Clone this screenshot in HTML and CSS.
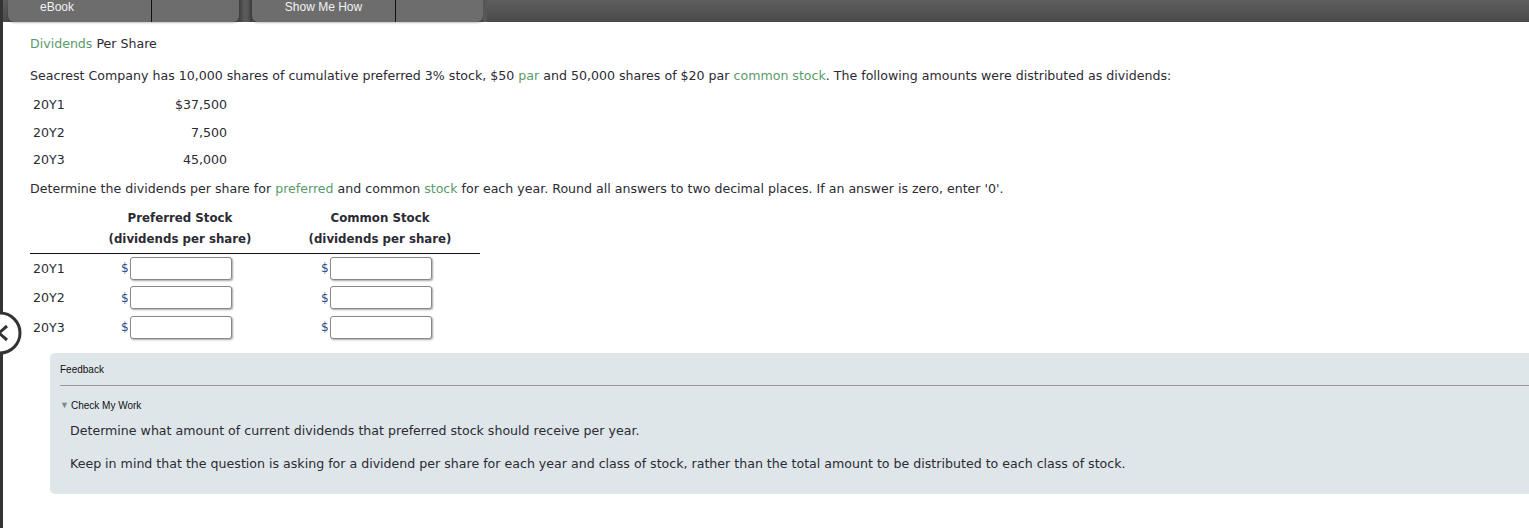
FILE: index.html
```html
<!DOCTYPE html>
<html>
<head>
<meta charset="utf-8">
<link rel="stylesheet" href="styles.css">
</head>
<body>
<div class="page">
  <div class="topbar">
    <div class="tab">
      <div class="tab-label tab-label-left">eBook</div>
      <div class="tab-blank"></div>
    </div>
    <div class="tab-gap"></div>
    <div class="tab">
      <div class="tab-label tab-label-center">Show Me How</div>
      <div class="tab-blank"></div>
    </div>
    <div class="bar-rest"></div>
  </div>

  <div class="content">
    <h1 class="title"><span class="term">Dividends</span> Per Share</h1>
    <p class="para">Seacrest Company has 10,000 shares of cumulative preferred 3% stock, $50 <span class="term">par</span> and 50,000 shares of $20 par <span class="term">common stock</span>. The following amounts were distributed as dividends:</p>

    <div class="amounts">
      <div class="amt-row"><span class="yr">20Y1</span><span class="val">$37,500</span></div>
      <div class="amt-row"><span class="yr">20Y2</span><span class="val">7,500</span></div>
      <div class="amt-row"><span class="yr">20Y3</span><span class="val">45,000</span></div>
    </div>

    <p class="para para2">Determine the dividends per share for <span class="term">preferred</span> and common <span class="term">stock</span> for each year. Round all answers to two decimal places. If an answer is zero, enter '0'.</p>

    <div class="answer">
      <div class="ans-head">
        <div class="yr-col"></div>
        <div class="col-a"><div class="head-cell">Preferred Stock<br>(dividends per share)</div></div>
        <div class="col-b"><div class="head-cell">Common Stock<br>(dividends per share)</div></div>
      </div>
      <div class="ans-row">
        <div class="yr-col">20Y1</div>
        <div class="col-a"><span class="dollar">$</span><span class="box"></span></div>
        <div class="col-b"><span class="dollar">$</span><span class="box"></span></div>
      </div>
      <div class="ans-row">
        <div class="yr-col">20Y2</div>
        <div class="col-a"><span class="dollar">$</span><span class="box"></span></div>
        <div class="col-b"><span class="dollar">$</span><span class="box"></span></div>
      </div>
      <div class="ans-row">
        <div class="yr-col">20Y3</div>
        <div class="col-a"><span class="dollar">$</span><span class="box"></span></div>
        <div class="col-b"><span class="dollar">$</span><span class="box"></span></div>
      </div>
    </div>

    <div class="feedback">
      <div class="fb-title">Feedback</div>
      <div class="fb-check"><span class="tri">&#9660;</span>Check My Work</div>
      <p class="fb-text">Determine what amount of current dividends that preferred stock should receive per year.</p>
      <p class="fb-text">Keep in mind that the question is asking for a dividend per share for each year and class of stock, rather than the total amount to be distributed to each class of stock.</p>
    </div>
  </div>

  <div class="nav-prev">
    <svg width="46" height="46" viewBox="0 0 46 46">
      <circle cx="23" cy="23" r="20" fill="#fff" stroke="#333" stroke-width="3"/>
      <path d="M30 16 L22 23 L30 30" fill="none" stroke="#333" stroke-width="3"/>
    </svg>
  </div>
</div>
</body>
</html>
```

FILE: styles.css
```css
html, body {
  margin: 0;
  padding: 0;
  background: #fff;
}
body {
  font-family: "DejaVu Sans", Verdana, sans-serif;
  font-size: 12.6px;
  color: #2b2b33;
}
.page {
  position: relative;
  min-height: 528px;
  border-left: 3px solid #333;
}
.topbar {
  display: flex;
  height: 22px;
  background: linear-gradient(#5e5e5e, #4a4a4a);
  padding-left: 5px;
}
.tab {
  display: flex;
  width: 231px;
  height: 22px;
  background: #6d6d6d;
  border-radius: 0 0 6px 6px;
  box-shadow: 0 1px 2px rgba(0,0,0,0.25);
  font-family: "Liberation Sans", Arial, sans-serif;
  font-size: 12px;
  color: #f2f2f2;
}
.tab-label {
  width: 143px;
  border-right: 1px solid #111;
  line-height: 14px;
}
.tab-label-left {
  padding-left: 32px;
  width: 111px;
}
.tab-label-center {
  text-align: center;
}
.tab-blank {
  flex: 1;
}
.tab-gap {
  width: 13px;
  background: linear-gradient(90deg, #3e3e3e, #5a5a5a 40%, #5a5a5a 60%, #3e3e3e);
}
.bar-rest {
  flex: 1;
  border-left: 4px solid #575757;
}
.content {
  padding-left: 27px;
}
.title {
  margin: 14px 0 0;
  font-size: 12.6px;
  font-weight: normal;
  line-height: 16px;
}
.term {
  color: #5a9b6b;
}
.para {
  margin: 16px 0 0;
  line-height: 16px;
}
.amounts {
  margin-top: 7px;
  width: 194px;
  padding-left: 3px;
}
.amt-row {
  display: flex;
  justify-content: space-between;
  height: 27.5px;
  line-height: 27.5px;
}
.para2 {
  margin-top: 7px;
}
.answer {
  margin-top: 11px;
  width: 450px;
}
.ans-head {
  display: flex;
  border-bottom: 1px solid #111;
  font-weight: bold;
  font-size: 11.8px;
  padding-bottom: 3px;
  line-height: 21px;
}
.yr-col {
  width: 85px;
  padding-left: 3px;
}
.col-a {
  width: 200px;
  display: flex;
  align-items: center;
}
.col-b {
  width: 162px;
  display: flex;
  align-items: center;
}
.head-cell {
  width: 124px;
  display: flex;
  justify-content: center;
  text-align: center;
  white-space: nowrap;
}
.ans-row {
  display: flex;
  align-items: center;
  height: 29.5px;
}
.dollar {
  color: #2a4a8a;
  width: 9px;
  padding-left: 3px;
  font-size: 12px;
}
.box {
  width: 100px;
  height: 21px;
  border: 1px solid #888;
  border-radius: 3px;
  background: #fff;
  box-shadow: 1px 1px 2px rgba(0,0,0,0.35);
}
.feedback {
  margin: 11px 0 0 20px;
  background: #dfe6ea;
  border-radius: 5px 0 0 5px;
  padding: 11px 0 22px 10px;
}
.fb-title {
  font-family: "Liberation Sans", Arial, sans-serif;
  font-size: 10px;
  color: #111;
  padding-bottom: 9px;
  border-bottom: 1px solid #999;
  line-height: 12px;
}
.fb-check {
  margin-top: 13px;
  font-family: "Liberation Sans", Arial, sans-serif;
  font-size: 10px;
  color: #111;
  line-height: 12px;
}
.tri {
  color: #888;
  font-size: 9px;
  margin-right: 2px;
  vertical-align: 1px;
}
.fb-text {
  margin: 11px 0 0 10px;
  line-height: 16px;
}
.fb-text + .fb-text {
  margin-top: 17px;
}
.nav-prev {
  position: absolute;
  left: -26px;
  top: 310px;
  width: 46px;
  height: 46px;
}
.nav-prev svg {
  display: block;
}
```
